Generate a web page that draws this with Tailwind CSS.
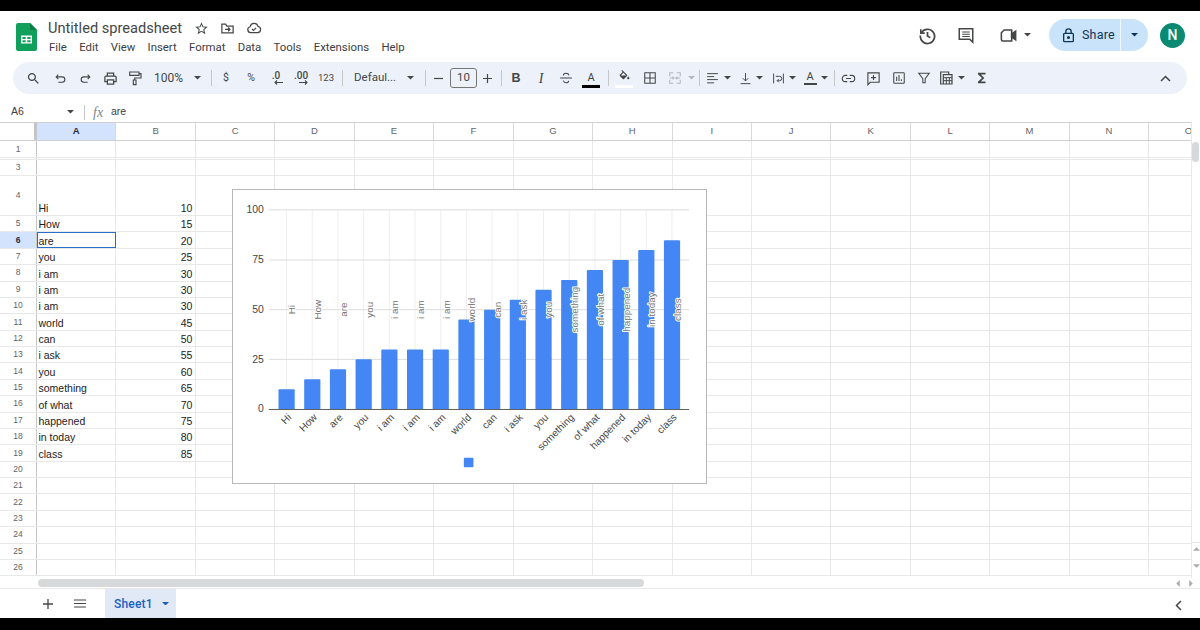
<!DOCTYPE html>
<html lang="en">
<head>
  <meta charset="UTF-8">
  <title>Untitled spreadsheet</title>
  <script src="https://cdn.jsdelivr.net/npm/@tailwindcss/browser@4"></script>
</head>
<body class="bg-white font-[Roboto,sans-serif] text-[#444746] overflow-hidden">
  <div class="flex flex-col w-[1200px] h-[630px] overflow-hidden">
    <div class="h-[11px] bg-black shrink-0"></div>

    <!-- Title and menus -->
    <header class="h-[51px] shrink-0 flex items-start">
      <svg class="ml-[16px] mt-[12px] w-[21px] h-[28px] shrink-0" viewBox="0 0 21 28">
        <path d="M2 0h12l7 7v19a2 2 0 0 1-2 2H2a2 2 0 0 1-2-2V2a2 2 0 0 1 2-2z" fill="#11a05c"/>
        <path d="M14 0l7 7h-7z" fill="#0b8048"/>
        <path d="M5 12.500h11v8H5z M6.500 14v2h3.200v-2z M11.300 14v2h3.200v-2z M6.500 17.300v2h3.200v-2z M11.300 17.300v2h3.200v-2z" fill="#fff" fill-rule="evenodd"/>
      </svg>
      <div class="ml-[11px] flex flex-col">
        <div class="flex items-center h-[20px] mt-[7px]">
          <span class="text-[14.6px] leading-none text-[#444746] w-[145.5px] whitespace-nowrap">Untitled spreadsheet</span>
          <svg class="w-[15px] h-[15px]" viewBox="0 0 24 24" fill="#444746"><path d="M22 9.240l-7.190-.62L12 2 9.190 8.630 2 9.240l5.460 4.730L5.820 21 12 17.270 18.180 21l-1.630-7.030L22 9.240zM12 15.400l-3.760 2.270 1-4.280-3.320-2.880 4.380-.38L12 6.100l1.710 4.040 4.380.38-3.320 2.880 1 4.280L12 15.400z"/></svg>
          <svg class="ml-[11px] w-[15px] h-[15px]" viewBox="0 0 24 24" fill="none" stroke="#444746" stroke-width="2"><path d="M3 19V5h6l2 3h10v11z"/><path d="M8 13.500h8M13 10.500l3 3-3 3"/></svg>
          <svg class="ml-[11px] w-[16px] h-[16px]" viewBox="0 0 24 24" fill="none" stroke="#444746" stroke-width="1.800"><path d="M7 19a4.500 4.500 0 0 1-.7-8.900A6 6 0 0 1 18 9.500a4.800 4.800 0 0 1-.5 9.500z"/><path d="M9 13.500l2.200 2.200 4-4"/></svg>
        </div>
        <nav class="flex gap-[12.25px] mt-[2px] ml-[1px] text-[11.4px] leading-[14px] text-[#3c4043] whitespace-nowrap">
          <span>File</span><span>Edit</span><span>View</span><span>Insert</span><span>Format</span><span>Data</span><span>Tools</span><span>Extensions</span><span>Help</span>
        </nav>
      </div>
      <div class="ml-auto flex items-center h-[32px] mt-[8px] mr-[15px]">
        <svg class="w-[19px] h-[19px]" viewBox="0 0 24 24" fill="none" stroke="#444746" stroke-width="2.200"><path d="M4.200 8.500A9 9 0 1 1 3 12"/><path d="M3.500 4v5h5" stroke-width="2"/><path d="M12 7.500V12.500l3.500 2.200"/></svg>
        <svg class="ml-[20px] w-[18px] h-[18px]" viewBox="0 0 24 24" fill="none" stroke="#444746" stroke-width="2"><path d="M3 3.500h18v18l-4-4H3z"/><path d="M7 8h10M7 11h10M7 14h10" stroke-width="1.600"/></svg>
        <svg class="ml-[24px] w-[19px] h-[19px]" viewBox="0 0 24 24" fill="none" stroke="#444746" stroke-width="2"><path d="M6.500 5H16v14H5a2 2 0 0 1-2-2V8.500z"/><path d="M16 10l5-3.500v11l-5-3.500z" fill="#444746"/></svg>
        <svg class="ml-[6px] w-[7px] h-[3.500px]" viewBox="0 0 8 4" fill="#444746"><path d="M0 0h8L4 4z"/></svg>
        <div class="ml-[18px] w-[99px] h-[32px] flex rounded-full bg-[#c9e4fa] text-[#0f3557]">
          <div class="w-[72px] flex items-center pl-[13px] border-r border-white/70">
            <svg class="w-[13px] h-[15px]" viewBox="0 0 14 17" fill="none" stroke="#0f3557" stroke-width="1.500"><rect x="1.500" y="6" width="11" height="9.500" rx="1"/><path d="M4 6V4a3 3 0 0 1 6 0v2"/><circle cx="7" cy="10.800" r="1" fill="#0f3557"/></svg>
            <span class="ml-[7px] text-[12.5px] tracking-[0.2px]">Share</span>
          </div>
          <div class="flex-1 flex items-center justify-center">
            <svg class="w-[7px] h-[3.500px]" viewBox="0 0 8 4" fill="#0f3557"><path d="M0 0h8L4 4z"/></svg>
          </div>
        </div>
        <div class="ml-[12px] w-[25px] h-[25px] rounded-full bg-[#0a8a72] text-white text-[14px] font-medium flex items-center justify-center">N</div>
      </div>
    </header>

    <!-- Toolbar -->
    <div class="h-[32px] shrink-0 mx-[13px] rounded-full bg-[#edf2fa] flex items-center pl-[7.5px] pr-[10px] text-[#444746]">
      <div class="w-[25px] flex justify-center"><svg class="w-[15px] h-[15px]" viewBox="0 0 24 24" fill="#444746"><path d="M15.500 14h-.79l-.28-.27C15.410 12.590 16 11.110 16 9.500 16 5.910 13.090 3 9.500 3S3 5.910 3 9.500 5.910 16 9.500 16c1.610 0 3.090-.59 4.230-1.570l.27.28v.79l5 4.990L20.490 19l-4.990-5zm-6 0C7.010 14 5 11.990 5 9.500S7.010 5 9.500 5 14 7.010 14 9.500 11.990 14 9.500 14z"/></svg></div>
      <div class="ml-[2px] w-[25px] flex justify-center"><svg class="w-[13px] h-[13px]" viewBox="0 0 24 24" fill="none" stroke="#444746" stroke-width="2"><path d="M8 5L4 9l4 4M4 9h11a5 5 0 0 1 0 10H8"/></svg></div>
      <div class="w-[25px] flex justify-center"><svg class="w-[13px] h-[13px]" viewBox="0 0 24 24" fill="none" stroke="#444746" stroke-width="2"><path d="M16 5l4 4-4 4M20 9H9a5 5 0 0 0 0 10h7"/></svg></div>
      <div class="w-[25px] flex justify-center"><svg class="w-[15px] h-[15px]" viewBox="0 0 24 24" fill="none" stroke="#444746" stroke-width="2"><path d="M7 8V3.500h10V8"/><path d="M7 17H3v-7a2 2 0 0 1 2-2h14a2 2 0 0 1 2 2v7h-4"/><path d="M7 14h10v7H7z"/></svg></div>
      <div class="w-[25px] flex justify-center"><svg class="w-[16px] h-[16px]" viewBox="0 0 24 24" fill="none" stroke="#444746" stroke-width="1.700"><path d="M4 3h14v5H4z"/><path d="M18 5.500h3V12h-9.500v3"/><path d="M9.500 15h4v7h-4z"/></svg></div>
      <span class="ml-[6.5px] w-[36px] text-[12px]">100%</span>
      <div class="w-[14px] flex justify-center"><svg class="w-[7px] h-[3.500px]" viewBox="0 0 8 4" fill="#444746"><path d="M0 0h8L4 4z"/></svg></div>
      <div class="ml-[7px] w-px h-[16px] bg-[#c7c7c7]"></div>
      <span class="ml-[1.5px] w-[25px] text-center text-[10.5px]">$</span>
      <span class="w-[25px] text-center text-[10.5px]">%</span>
      <div class="w-[25px] flex flex-col items-center leading-none">
        <span class="text-[10px] font-medium leading-[9px]">.0</span>
        <svg class="ml-[4px] w-[9px] h-[5px]" viewBox="0 0 9 5" fill="none" stroke="#444746" stroke-width="1.100"><path d="M9 2.500H1M3 .5l-2 2 2 2"/></svg>
      </div>
      <div class="w-[25px] flex flex-col items-center leading-none">
        <span class="text-[10px] font-medium leading-[9px]">.00</span>
        <svg class="ml-[4px] w-[9px] h-[5px]" viewBox="0 0 9 5" fill="none" stroke="#444746" stroke-width="1.100"><path d="M0 2.500h8M6 .5l2 2-2 2"/></svg>
      </div>
      <span class="w-[25px] text-center text-[9.5px]">123</span>
      <div class="ml-[3.5px] w-px h-[16px] bg-[#c7c7c7]"></div>
      <span class="ml-[11px] w-[42px] text-[11.5px] whitespace-nowrap">Defaul...</span>
      <div class="ml-[7px] w-[14px] flex justify-center"><svg class="w-[7px] h-[3.500px]" viewBox="0 0 8 4" fill="#444746"><path d="M0 0h8L4 4z"/></svg></div>
      <div class="ml-[8px] w-px h-[16px] bg-[#c7c7c7]"></div>
      <div class="w-[24px] flex justify-center"><svg class="w-[9px] h-[9px]" viewBox="0 0 9 9" stroke="#444746" stroke-width="1.200"><path d="M0 4.500h9"/></svg></div>
      <div class="w-[27px] h-[20px] border border-[#747775] rounded-[3px] flex items-center justify-center text-[11.5px]">10</div>
      <div class="w-[21px] flex justify-center"><svg class="w-[9px] h-[9px]" viewBox="0 0 9 9" stroke="#444746" stroke-width="1.200"><path d="M0 4.500h9M4.500 0v9"/></svg></div>
      <div class="ml-[3px] w-px h-[16px] bg-[#c7c7c7]"></div>
      <span class="ml-[1.5px] w-[25px] text-center text-[12.5px] font-bold font-['Liberation_Sans',sans-serif]">B</span>
      <span class="w-[25px] text-center text-[14px] italic font-['Liberation_Serif',serif]">I</span>
      <div class="w-[25px] flex justify-center"><svg class="w-[14px] h-[14px]" viewBox="0 0 24 24" fill="none" stroke="#444746" stroke-width="1.800"><path d="M2 12h20"/><path d="M17 7.500C16.500 5 14.500 4 12 4S7.500 5.200 7.500 7.500M7.500 16.500C8 19 9.500 20 12 20s4.500-1.200 4.500-3.500"/></svg></div>
      <div class="w-[25px] h-[24px] flex flex-col items-center justify-end pb-[2px]">
        <span class="text-[11px] leading-[12px]">A</span>
        <div class="w-[18px] h-[3px] bg-black mt-[1px]"></div>
      </div>
      <div class="ml-[4.500px] w-px h-[16px] bg-[#c7c7c7]"></div>
      <div class="ml-[2.500px] w-[25px] h-[24px] flex flex-col items-center justify-end pb-[2px]">
        <svg class="w-[13px] h-[13px]" viewBox="0 0 24 24" fill="#444746"><path d="M16.560 8.940L7.620 0 6.210 1.410l2.380 2.380-5.150 5.150c-.59.59-.59 1.540 0 2.120l5.500 5.500c.29.29.68.44 1.060.44s.77-.15 1.060-.44l5.500-5.500c.59-.58.59-1.530 0-2.120zM5.210 10L10 5.210 14.790 10H5.210zM19 11.500s-2 2.170-2 3.500c0 1.100.9 2 2 2s2-.9 2-2c0-1.330-2-3.500-2-3.500z"/></svg>
        <div class="w-[18px] h-[3px] bg-white mt-[2px]"></div>
      </div>
      <div class="ml-[1px] w-[25px] flex justify-center"><svg class="w-[14px] h-[14px]" viewBox="0 0 24 24" fill="none" stroke="#444746" stroke-width="1.800"><path d="M3 3h18v18H3zM12 3v18M3 12h18"/></svg></div>
      <div class="ml-[1px] w-[23px] flex justify-center"><svg class="w-[14px] h-[14px]" viewBox="0 0 24 24" fill="none" stroke="#b4b7ba" stroke-width="1.800"><path d="M9 3H3v6M3 15v6h6M15 3h6v6M21 15v6h-6M3 12h6M15 12h6M8 9.500L10.500 12 8 14.500M16 9.500L13.500 12l2.500 2.500"/></svg></div>
      <div class="w-[9px] flex justify-center"><svg class="w-[7px] h-[3.500px]" viewBox="0 0 8 4" fill="#b4b7ba"><path d="M0 0h8L4 4z"/></svg></div>
      <div class="ml-[3.500px] w-px h-[16px] bg-[#c7c7c7]"></div>
      <div class="ml-[2px] w-[21px] flex justify-center"><svg class="w-[13px] h-[13px]" viewBox="0 0 24 24" fill="none" stroke="#444746" stroke-width="1.800"><path d="M2 3h20M2 8.500h13M2 14h20M2 20h13"/></svg></div>
      <svg class="w-[7px] h-[3.500px] mx-[0.5px]" viewBox="0 0 8 4" fill="#444746"><path d="M0 0h8L4 4z"/></svg>
      <div class="ml-[4px] w-[20px] flex justify-center"><svg class="w-[13px] h-[13px]" viewBox="0 0 24 24" fill="none" stroke="#444746" stroke-width="1.800"><path d="M12 2v14M7 11.500l5 5 5-5M3 21.500h18"/></svg></div>
      <svg class="w-[7px] h-[3.500px] mx-[0.5px]" viewBox="0 0 8 4" fill="#444746"><path d="M0 0h8L4 4z"/></svg>
      <div class="ml-[5px] w-[20px] flex justify-center"><svg class="w-[13px] h-[13px]" viewBox="0 0 24 24" fill="none" stroke="#444746" stroke-width="1.800"><path d="M3 3v18M21 3v18M7 8h7a4 4 0 0 1 0 8h-4M12.500 13L9.500 16l3 3"/></svg></div>
      <svg class="w-[7px] h-[3.500px] mx-[0.5px]" viewBox="0 0 8 4" fill="#444746"><path d="M0 0h8L4 4z"/></svg>
      <div class="ml-[4px] w-[20px] h-[24px] flex flex-col items-center justify-center">
        <span class="text-[11px] leading-[11px]">A</span>
        <div class="w-[13px] h-[1.500px] bg-[#444746] mt-[1px]"></div>
      </div>
      <svg class="w-[7px] h-[3.500px] mx-[0.5px]" viewBox="0 0 8 4" fill="#444746"><path d="M0 0h8L4 4z"/></svg>
      <div class="ml-[6px] w-px h-[16px] bg-[#c7c7c7]"></div>
      <div class="ml-[1px] w-[25px] flex justify-center"><svg class="w-[15px] h-[15px]" viewBox="0 0 24 24" fill="none" stroke="#444746" stroke-width="1.800"><path d="M10 7H7a5 5 0 0 0 0 10h3M14 7h3a5 5 0 0 1 0 10h-3M8 12h8"/></svg></div>
      <div class="w-[25px] flex justify-center"><svg class="w-[15px] h-[15px]" viewBox="0 0 24 24" fill="none" stroke="#444746" stroke-width="1.800"><path d="M3 3h18v15H7l-4 4z"/><path d="M12 6.500v8M8 10.500h8"/></svg></div>
      <div class="w-[25px] flex justify-center"><svg class="w-[14px] h-[14px]" viewBox="0 0 24 24" fill="none" stroke="#444746" stroke-width="1.800"><rect x="3" y="3" width="18" height="18" rx="1"/><path d="M8 10v7M12 7v10M16 14v3"/></svg></div>
      <div class="w-[25px] flex justify-center"><svg class="w-[14px] h-[14px]" viewBox="0 0 24 24" fill="none" stroke="#444746" stroke-width="1.800"><path d="M3 4h18l-7 9v7h-4v-7z"/></svg></div>
      <div class="w-[20px] flex justify-center"><svg class="w-[16px] h-[16px]" viewBox="0 0 24 24" fill="none" stroke="#444746" stroke-width="1.800"><path d="M7 21H4V3h12v3"/><path d="M8 7h13v14H8z"/><path d="M8 11.500h13M8 16h13M12.500 11.500V21M17 11.500V21" stroke-width="1.500"/></svg></div>
      <svg class="ml-[1.5px] mr-[0.5px] w-[7px] h-[3.500px]" viewBox="0 0 8 4" fill="#444746"><path d="M0 0h8L4 4z"/></svg>
      <div class="ml-[4px] w-[25px] flex justify-center"><svg class="w-[14px] h-[14px]" viewBox="0 0 24 24" fill="#444746"><path d="M18 3H5v2.500l7 6.500-7 6.500V21h13v-3H10l6-6-6-6h8z"/></svg></div>
      <div class="ml-auto w-[24px] flex justify-center"><svg class="w-[11px] h-[7px]" viewBox="0 0 11 7" fill="none" stroke="#444746" stroke-width="1.500"><path d="M1 6l4.500-4.500L10 6"/></svg></div>
    </div>

    <!-- Formula bar -->
    <div class="h-[28px] shrink-0 flex items-center pt-[8px] text-[10.5px] font-['Liberation_Sans',sans-serif] text-[#3c4043]">
      <span class="ml-[11px] w-[55px]">A6</span>
      <svg class="w-[7px] h-[3.500px] mx-[0.5px]" viewBox="0 0 8 4" fill="#444746"><path d="M0 0h8L4 4z"/></svg>
      <div class="ml-[10px] w-px h-[15px] bg-[#c7c7c7]"></div>
      <span class="ml-[8px] w-[18px] text-[14px] italic text-[#80868b] font-['Liberation_Serif',serif]">fx</span>
      <span>are</span>
    </div>

    <!-- Sheet grid -->
    <div class="relative h-[456px] shrink-0 overflow-hidden font-['Liberation_Sans',sans-serif]">
      <div id="grid" class="w-[1192px] overflow-hidden"></div>

      <!-- Chart -->
      <svg id="chart" class="absolute left-[232px] top-[67px] w-[475px] h-[295px] bg-white border border-[#b8b8b8] opacity-[.99]" viewBox="232.500 189.500 475 295"></svg>

      <!-- Vertical scrollbar -->
      <div class="absolute right-0 top-0 bottom-0 w-[9px] bg-white border-l border-[#e8e8e8]">
        <div class="mt-[20px] w-[7px] h-[20px] rounded-full bg-[#d6d8da]"></div>
        <div class="absolute left-0 right-0 bottom-[10px] h-[26px] flex flex-col items-center justify-between border-t border-[#e8e8e8] pt-[4px]">
          <svg class="w-[7px] h-[4px]" viewBox="0 0 8 4" fill="#a9acaf"><path d="M0 4h8L4 0z"/></svg>
          <svg class="w-[7px] h-[4px]" viewBox="0 0 8 4" fill="#a9acaf"><path d="M0 0h8L4 4z"/></svg>
        </div>
      </div>
    </div>

    <!-- Horizontal scrollbar -->
    <div class="h-[11px] shrink-0 flex items-center border-b border-[#e8e8e8] pl-[38px]">
      <div class="w-[606px] h-[8px] rounded-full bg-[#d6d8da]"></div>
      <div class="ml-auto mr-[7px] flex gap-[9px]">
        <svg class="w-[4px] h-[7px]" viewBox="0 0 4 8" fill="#a9acaf"><path d="M4 0v8L0 4z"/></svg>
        <svg class="w-[4px] h-[7px]" viewBox="0 0 4 8" fill="#a9acaf"><path d="M0 0v8l4-4z"/></svg>
      </div>
    </div>

    <!-- Sheet tabs -->
    <div class="h-[29px] shrink-0 flex items-center">
      <svg class="ml-[43px] w-[10px] h-[10px]" viewBox="0 0 10 10" stroke="#444746" stroke-width="1.300"><path d="M0 5h10M5 0v10"/></svg>
      <svg class="ml-[21px] w-[12px] h-[9px]" viewBox="0 0 12 9" stroke="#444746" stroke-width="1.200"><path d="M0 1h12M0 4.500h12M0 8h12"/></svg>
      <div class="ml-[19px] h-full w-[71px] bg-[#e1e9f7] flex items-center pl-[9px] text-[#1a5fc4]">
        <span class="text-[12px] font-medium tracking-[0.2px]">Sheet1</span>
        <svg class="ml-[9px] w-[7px] h-[3.500px]" viewBox="0 0 8 4" fill="#1a5fc4"><path d="M0 0h8L4 4z"/></svg>
      </div>
      <svg class="ml-auto mr-[18px] mt-[3px] w-[7px] h-[11px]" viewBox="0 0 7 11" fill="none" stroke="#444746" stroke-width="1.500"><path d="M6 1L1.500 5.500 6 10"/></svg>
    </div>

    <div class="h-[12px] bg-black shrink-0"></div>
  </div>

  <script>
    const letters = "ABCDEFGHIJKLMNO".split("");
    const words = ["Hi","How","are","you","i am","i am","i am","world","can","i ask","you","something","of what","happened","in today","class"];
    const values = [10,15,20,25,30,30,30,45,50,55,60,65,70,75,80,85];

    // Column headers
    let html = `<div class="flex h-[19px] border-t border-b border-[#d0d0d0]">
      <div class="w-[37px] shrink-0 border-r-[3px] border-[#c4c4c4]"></div>`;
    letters.forEach((l) => {
      const on = l === "A";
      html += `<div class="w-[79.45px] shrink-0 flex items-center justify-center text-[9.5px] border-r border-[#d9d9d9] ${on ? "bg-[#d3e3fd] font-bold text-[#1f2a44]" : "text-[#5f6368]"}">${l}</div>`;
    });
    html += `</div>`;

    // Rows: [label, height]
    const rows = [["1", 17], ["", 2], ["3", 16], ["4", 40]];
    for (let n = 5; n <= 26; n++) rows.push([String(n), 16.38]);

    rows.forEach(([label, h]) => {
      const idx = Number(label) - 4;
      const word = idx >= 0 ? words[idx] || "" : "";
      const val = idx >= 0 && values[idx] ? values[idx] : "";
      const sel = label === "6";
      html += `<div class="flex border-b border-[#e8e8e8]" style="height:${h}px">
        <div class="w-[37px] shrink-0 flex items-center justify-center text-[8.5px] border-r border-[#c8c8c8] ${sel ? "bg-[#d3e3fd] font-bold text-[#1f2a44]" : "text-[#5f6368]"}">${label}</div>`;
      letters.forEach((l, i) => {
        let cls = "";
        let txt = "";
        if (i === 0) { cls = "pl-[1.5px]"; txt = word; }
        if (i === 1) { cls = "justify-end pr-[2.5px]"; txt = val; }
        if (i === 0 && sel) cls += " outline-[1.5px] outline outline-[#2a6fc9] -outline-offset-1";
        html += `<div class="w-[79.45px] shrink-0 flex items-end text-[10.5px] leading-[14px] text-[#222] border-r border-[#e8e8e8] ${cls}">${txt}</div>`;
      });
      html += `</div>`;
    });
    document.getElementById("grid").innerHTML = html;

    // Chart, in page coordinates
    const base = 410;
    const barX = (i) => 277.7 + i * 25.87;
    let svg = "";
    values.forEach((v, i) => {
      const cx = barX(i) + 8.1;
      svg += `<path d="M${cx} 209.5V410" stroke="#efefef" stroke-width="1"/>`;
    });
    [[100, 209.5], [75, 260], [50, 310], [25, 360]].forEach(([t, y]) => {
      svg += `<path d="M268 ${y}H691" stroke="#dcdcdc" stroke-width="1"/>`;
    });
    [[100, 209.5], [75, 260], [50, 310], [25, 360], [0, 410]].forEach(([t, y]) => {
      svg += `<text x="263" y="${y + 3.3}" text-anchor="end" font-size="10.5" fill="#444">${t}</text>`;
    });
    values.forEach((v, i) => {
      const y = base - v * 2;
      svg += `<rect x="${barX(i)}" y="${y}" width="16.3" height="${v * 2 + 1}" rx="1" fill="#4285f4"/>`;
    });
    svg += `<path d="M268 410.500H691" stroke="#5f5f5f" stroke-width="1"/>`;
    words.forEach((w, i) => {
      const cx = barX(i) + 8.1;
      svg += `<text transform="translate(${cx + 9} 310) rotate(-90)" text-anchor="middle" font-size="10" fill="#757575" stroke="#fff" stroke-width="2" paint-order="stroke" stroke-linejoin="round">${w}</text>`;
      svg += `<text transform="translate(${cx + 5.5} 419) rotate(-45)" text-anchor="end" font-size="10.2" fill="#444">${w}</text>`;
    });
    svg += `<rect x="464.3" y="459" width="9.7" height="9.7" rx="1" fill="#4285f4"/>`;
    document.getElementById("chart").innerHTML = svg;
  </script>
</body>
</html>
